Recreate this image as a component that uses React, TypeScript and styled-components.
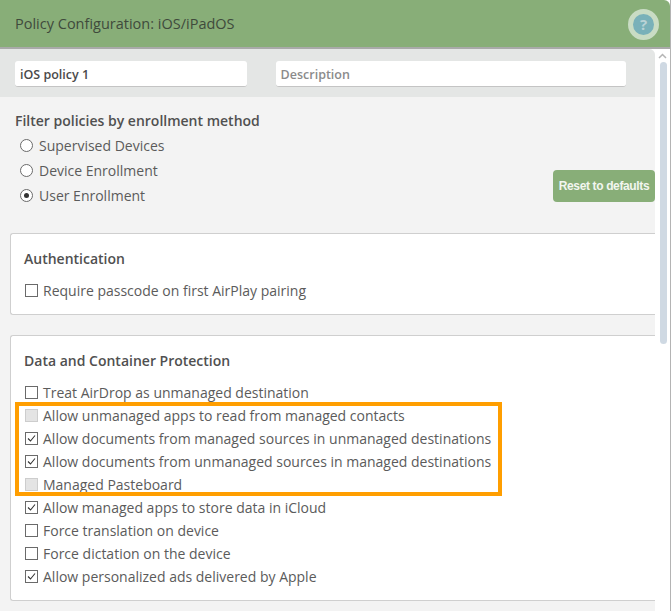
import React from "react";
import styled, { createGlobalStyle } from "styled-components";

const Global = createGlobalStyle`
  html, body { margin: 0; padding: 0; background: #fff; }
  body { font-family: "Open Sans", "Noto Sans", sans-serif; color: #4a4a4a; }
`;

const Dialog = styled.div`
  width: 671px;
  height: 611px;
  box-sizing: border-box;
  border-right: 1px solid #b4b4b4;
  overflow: hidden;
  display: flex;
  flex-direction: column;
`;

const Header = styled.header`
  height: 49px;
  flex: none;
  box-sizing: border-box;
  background: #88ae78;
  border-bottom: 2px solid #a9aaa9;
  border-top-right-radius: 6px;
  display: flex;
  align-items: center;
  justify-content: space-between;
  padding: 0 11px 0 15px;
`;

const Title = styled.h1`
  margin: 0;
  font-size: 14.5px;
  font-weight: 400;
  color: #3f4a3c;
`;

const Help = styled.div`
  width: 21px;
  height: 21px;
  border-radius: 50%;
  margin-top: 2px;
  background: #79b1b9;
  border: 5px solid #c9dcc4;
  color: #b9d3d6;
  font-size: 15px;
  font-weight: 700;
  display: flex;
  align-items: center;
  justify-content: center;
  line-height: 1;
`;

const Body = styled.div`
  flex: 1;
  min-height: 0;
  display: flex;
`;

const Main = styled.main`
  width: 655px;
  flex: none;
  background: #f3f3f3;
  border-top-right-radius: 6px;
  overflow: hidden;
`;

const NameBar = styled.div`
  height: 48px;
  box-sizing: border-box;
  background: #e4e6e5;
  display: flex;
  gap: 29px;
  padding: 12px 29px 0 15px;
`;

const TextBox = styled.div<{ $grow?: boolean; $muted?: boolean }>`
  height: 26px;
  box-sizing: border-box;
  background: #fff;
  border-radius: 3px;
  border-bottom: 1px solid #c4c4c4;
  padding: 1px 5px 0;
  font-size: 12.5px;
  line-height: 25px;
  font-weight: 600;
  color: ${(p) => (p.$muted ? "#8b8b8b" : "#4a4a4a")};
  width: ${(p) => (p.$grow ? "351px" : "232px")};
`;

const FilterArea = styled.section`
  height: 136px;
  box-sizing: border-box;
  position: relative;
  padding: 14px 0 0 15px;
`;

const SectionTitle = styled.div<{ $after?: number }>`
  font-size: 14px;
  font-weight: 600;
  line-height: 20px;
  color: #505050;
  margin-bottom: ${(p) => p.$after ?? 0}px;
`;

const RadioRow = styled.label`
  display: flex;
  align-items: center;
  gap: 6px;
  height: 25px;
  padding-left: 5px;
  font-size: 14px;
  color: #5b5b5b;
`;

const RadioDot = styled.span<{ $on?: boolean }>`
  width: 13px;
  height: 13px;
  box-sizing: border-box;
  border-radius: 50%;
  border: 1px solid #6a6a6a;
  background: #fff;
  display: flex;
  align-items: center;
  justify-content: center;
  &::after {
    content: "";
    width: 5px;
    height: 5px;
    border-radius: 50%;
    background: ${(p) => (p.$on ? "#333" : "transparent")};
  }
`;

const ResetButton = styled.button`
  position: absolute;
  right: 0;
  top: 73px;
  width: 102px;
  height: 32px;
  border: 0;
  padding: 0;
  border-radius: 4px;
  background: #88ae78;
  color: #f2f6ef;
  font-family: "Liberation Sans", Arial, sans-serif;
  font-size: 12px;
  font-weight: 700;
  letter-spacing: -0.36px;
`;

const Panel = styled.section<{ $height: number; $gap: number }>`
  position: relative;
  box-sizing: border-box;
  height: ${(p) => p.$height}px;
  margin: 0 0 ${(p) => p.$gap}px 10px;
  background: #fff;
  border: 1px solid #cfcfcf;
  border-right: 0;
  border-top-left-radius: 3px;
  border-bottom-left-radius: 3px;
  padding: 15px 0 0 13px;
`;

const CheckRow = styled.label`
  display: flex;
  align-items: center;
  gap: 5px;
  height: 23px;
  padding-left: 1px;
  font-size: 14px;
  color: #5b5b5b;
  white-space: nowrap;
`;

const Box = styled.span<{ $disabled?: boolean }>`
  width: 13px;
  height: 13px;
  box-sizing: border-box;
  flex: none;
  border: 1px solid ${(p) => (p.$disabled ? "#cdcdcd" : "#6a6a6a")};
  background: ${(p) => (p.$disabled ? "#e4e4e4" : "#fff")};
  display: flex;
  svg { display: block; }
`;

const Highlight = styled.div`
  position: absolute;
  left: 4px;
  top: 66px;
  width: 487px;
  height: 94px;
  box-sizing: border-box;
  border: 4px solid #ff9e00;
  pointer-events: none;
`;

const ScrollTrack = styled.div`
  width: 15px;
  flex: none;
  background: #fff;
  display: flex;
  flex-direction: column;
  align-items: center;
  padding-top: 4px;
  box-sizing: border-box;
`;

const ScrollThumb = styled.div`
  width: 7px;
  height: 282px;
  margin-top: 3px;
  margin-left: 1px;
  border-radius: 4px;
  background: #cfd9e3;
`;

const Check = () => (
  <svg width="11" height="11" viewBox="0 0 11 11">
    <path d="M2 5.5 L4.5 8 L9 2.5" fill="none" stroke="#333" strokeWidth="1.1" />
  </svg>
);

const Item = ({ label, on, disabled }: { label: string; on?: boolean; disabled?: boolean }) => (
  <CheckRow>
    <Box $disabled={disabled}>{on && <Check />}</Box>
    {label}
  </CheckRow>
);

export default function App() {
  return (
    <Dialog>
      <Global />
      <Header>
        <Title>Policy Configuration: iOS/iPadOS</Title>
        <Help>?</Help>
      </Header>
      <Body>
        <Main>
          <NameBar>
            <TextBox>iOS policy 1</TextBox>
            <TextBox $grow $muted>Description</TextBox>
          </NameBar>
          <FilterArea>
            <SectionTitle $after={2}>Filter policies by enrollment method</SectionTitle>
            <RadioRow><RadioDot />Supervised Devices</RadioRow>
            <RadioRow><RadioDot />Device Enrollment</RadioRow>
            <RadioRow><RadioDot $on />User Enrollment</RadioRow>
            <ResetButton>Reset to defaults</ResetButton>
          </FilterArea>
          <Panel $height={82} $gap={20}>
            <SectionTitle $after={10}>Authentication</SectionTitle>
            <Item label="Require passcode on first AirPlay pairing" />
          </Panel>
          <Panel $height={266} $gap={0}>
            <SectionTitle $after={10}>Data and Container Protection</SectionTitle>
            <Item label="Treat AirDrop as unmanaged destination" />
            <Item label="Allow unmanaged apps to read from managed contacts" disabled />
            <Item label="Allow documents from managed sources in unmanaged destinations" on />
            <Item label="Allow documents from unmanaged sources in managed destinations" on />
            <Item label="Managed Pasteboard" disabled />
            <Item label="Allow managed apps to store data in iCloud" on />
            <Item label="Force translation on device" />
            <Item label="Force dictation on the device" />
            <Item label="Allow personalized ads delivered by Apple" on />
            <Highlight />
          </Panel>
        </Main>
        <ScrollTrack>
          <svg width="9" height="6" viewBox="0 0 9 6">
            <path d="M1 5 L4.5 1.5 L8 5" fill="none" stroke="#b5b5b5" strokeWidth="1.5" />
          </svg>
          <ScrollThumb />
        </ScrollTrack>
      </Body>
    </Dialog>
  );
}
